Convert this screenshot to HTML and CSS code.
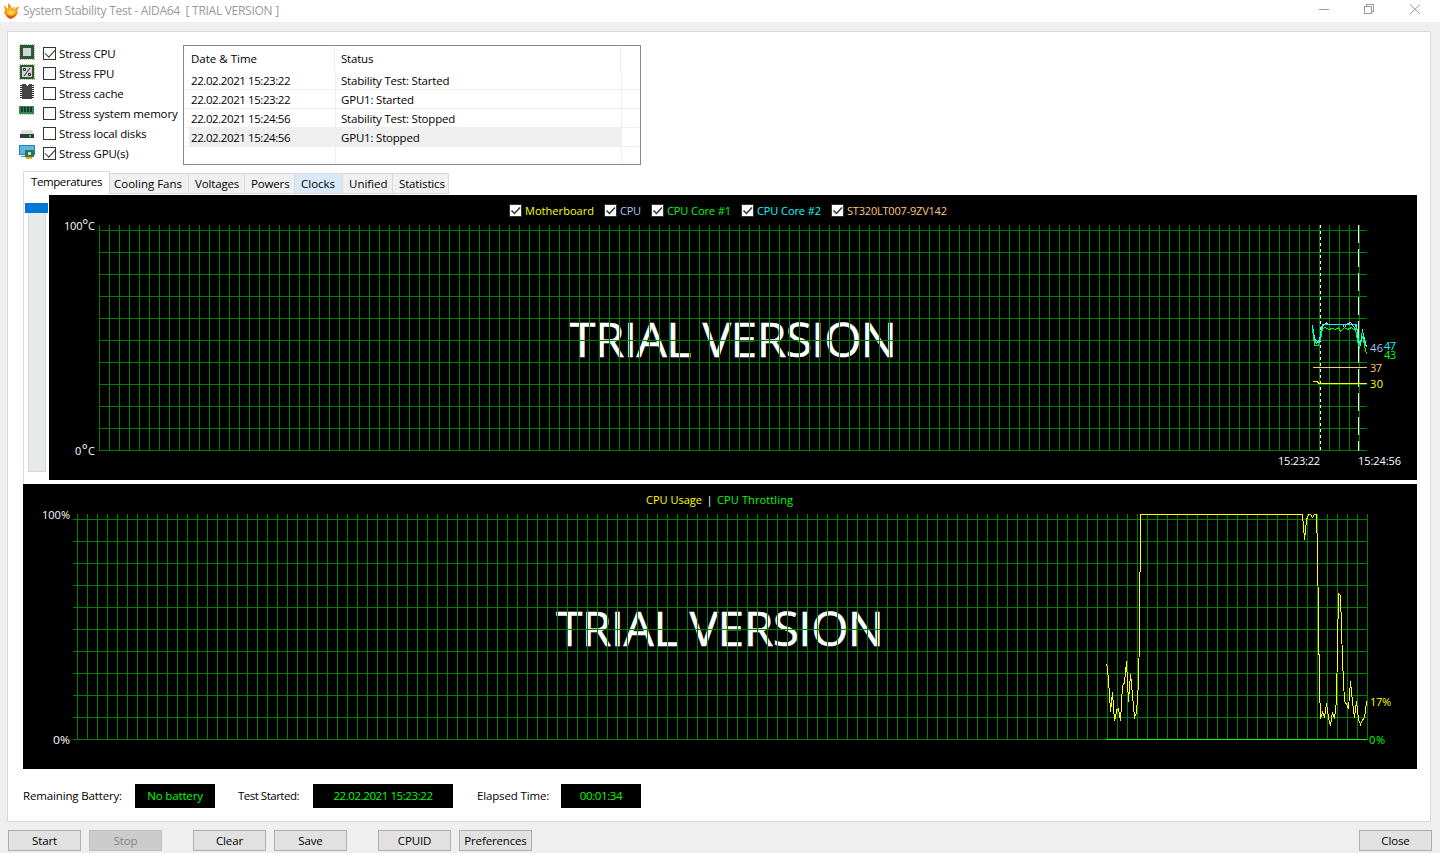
FILE: index.html
```html
<!DOCTYPE html>
<html lang="en">
<head>
    <meta charset="UTF-8">
    <meta name="viewport" content="width=device-width, initial-scale=1.0">
    <title>System Stability Test - AIDA64</title>
    <link rel="stylesheet" href="styles.css">
</head>
<body>
    <div class="titlebar">
        <svg class="logo" width="16" height="18" viewBox="0 0 16 18">
            <path fill="#f7931e" d="M1 4l4 4 0-6 3 3 1 3 3-3-1 4 3-3 2 0-2 4 1 2-3 4-4 2-4-2-3-4 1-3z"/>
            <path fill="#ffd83c" d="M3 8l3 3 0-6 2 5 3-2-1 3 3-2-2 4-3 1-3-1z"/>
            <path fill="#e5521a" d="M3 13l3 2 4 0 4-2-3 3-3 2-3-1z"/>
        </svg>
        <span class="caption">System Stability Test - AIDA64&nbsp; [ TRIAL VERSION ]</span>
        <svg class="winbtns" width="104" height="18" viewBox="1318 0 104 18">
            <path d="M1319 9.5h10M1364.500 6.500h7v7h-7zM1366.500 6v-2h7v7h-2"/>
            <path class="smooth" d="M1410 4.500l10 9.500M1420 4.500l-10 9.500"/>
        </svg>
    </div>

    <div class="panel">
        <div class="top">
            <ul class="stress">
                <li>
                    <svg width="16" height="16"><rect x=".5" y=".5" width="15" height="15" fill="none" stroke="#c9a94b" stroke-dasharray="1 1"/><rect x="1" y="1" width="14" height="14" fill="#27593f"/><rect x="4" y="4" width="8" height="8" fill="#d5d5d5"/></svg>
                    <i class="box on"></i><span>Stress CPU</span>
                </li>
                <li>
                    <svg width="16" height="16"><rect x=".5" y=".5" width="15" height="15" fill="none" stroke="#c9a94b" stroke-dasharray="1 1"/><rect x="1" y="1" width="14" height="14" fill="#27593f"/><rect x="3" y="3" width="10" height="10" fill="#d5d5d5"/><path d="M11 4l-6 8M4.500 4.500h2v2h-2zM9.500 9.500h2v2h-2z" fill="none" stroke="#222" shape-rendering="auto"/></svg>
                    <i class="box"></i><span>Stress FPU</span>
                </li>
                <li>
                    <svg width="16" height="16"><path d="M2.500 1v14M13.500 1v14" stroke="#222" stroke-width="3" stroke-dasharray="1 1"/><path d="M3 0h3l2 2 2-2h3v15H3z" fill="#444446"/></svg>
                    <i class="box"></i><span>Stress cache</span>
                </li>
                <li>
                    <svg width="16" height="16"><path d="M0 2h15v8H0z" fill="#2f8a5b"/><path d="M2 3h2v5H2zM5 3h2v5H5zM8 3h2v5H8zM11 3h2v5h-2z" fill="#24342c"/><path d="M1 10.500h13" stroke="#c9b458" stroke-dasharray="1 1"/></svg>
                    <i class="box"></i><span>Stress system memory</span>
                </li>
                <li>
                    <svg width="16" height="16"><path d="M3 6h10l2 4H1z" fill="#dcdcdc"/><path d="M1 10h14v4H1z" fill="#3a3a3a"/><path d="M10 11h2v2h-2z" fill="#2ce02c"/></svg>
                    <i class="box"></i><span>Stress local disks</span>
                </li>
                <li>
                    <svg width="16" height="16"><path d="M.5 1.500h15v9H.5z" fill="#5fb5ea" stroke="#2b7fb8"/><path d="M2 12h5v1H2z" fill="#4a94c4"/><path d="M6 6h9v7H6z" fill="#2a7a4e"/><path d="M9 8h3v3H9z" fill="#c8dccb"/><path d="M7 13h6v2H7z" fill="#f0a22b"/></svg>
                    <i class="box on"></i><span>Stress GPU(s)</span>
                </li>
            </ul>
            <div class="log">
                <div class="row head"><span>Date &amp; Time</span><span>Status</span></div>
                <div class="row"><span>22.02.2021 15:23:22</span><span>Stability Test: Started</span></div>
                <div class="row"><span>22.02.2021 15:23:22</span><span>GPU1: Started</span></div>
                <div class="row"><span>22.02.2021 15:24:56</span><span>Stability Test: Stopped</span></div>
                <div class="row selected"><span>22.02.2021 15:24:56</span><span>GPU1: Stopped</span></div>
                <div class="row last"><span></span><span></span></div>
            </div>
        </div>

        <div class="tabs">
            <div class="tab active">Temperatures</div>
            <div class="tab fans">Cooling Fans</div>
            <div class="tab volt">Voltages</div>
            <div class="tab pow">Powers</div>
            <div class="tab clk">Clocks</div>
            <div class="tab uni">Unified</div>
            <div class="tab stat">Statistics</div>
        </div>

        <div class="page">
            <div class="slider"><div class="thumb"></div></div>
            <svg class="chart" width="1368" height="285" viewBox="49 195 1368 285">
                <defs>
                    <pattern id="grid1" x="99" y="230" width="10" height="22" patternUnits="userSpaceOnUse">
                        <path d="M0 0h10v1H1v21H0z" fill="#008000"/>
                    </pattern>
                    <g id="check">
                        <path d="M.5.5h12v12H.5z" fill="#fff" stroke="#333"/>
                        <path d="M2.500 6.500l3 3 5.500-6" fill="none" stroke="#333" stroke-width="1.500" shape-rendering="auto"/>
                    </g>
                </defs>
                <use href="#check" x="509" y="204"/>
                <text x="525" y="215" textLength="69" fill="#ffff00">Motherboard</text>
                <use href="#check" x="604" y="204"/>
                <text x="620" y="215" textLength="21" fill="#a6caf0">CPU</text>
                <use href="#check" x="651" y="204"/>
                <text x="667" y="215" textLength="64" fill="#00ff00">CPU Core #1</text>
                <use href="#check" x="741" y="204"/>
                <text x="757" y="215" textLength="64" fill="#00ffff">CPU Core #2</text>
                <use href="#check" x="831" y="204"/>
                <text x="847" y="215" textLength="100" fill="#ffc878">ST320LT007-9ZV142</text>

                <text x="64" y="230" textLength="31" fill="#fff">100<tspan class="deg">°</tspan>C</text>
                <text x="75" y="455" textLength="20" fill="#fff">0<tspan class="deg">°</tspan>C</text>
                <text class="trial" x="569" y="357" textLength="328">TRIAL VERSION</text>
                <rect x="99" y="225" width="1268" height="226" fill="url(#grid1)"/>
                <path d="M1360 225h7v5h-7z"/>

                <path class="mark" d="M1320.500 225v226" stroke-dasharray="3 3"/>
                <path class="mark" d="M1358.500 225v226" stroke-dasharray="18 6"/>
                <polyline points="1312.500,325.500 1314.500,338.500 1317.500,341.500 1319.500,340.500 1321.500,328.500 1323.500,324.500 1325.500,324.500 1326.500,322.500 1328.500,324.500 1342.500,324.500 1344.500,327.500 1346.500,324.500 1350.500,322.500 1352.500,325.500 1354.500,327.500 1356.500,324.500 1358.500,342.500 1360.500,341.500 1363.500,334.500 1366.500,347.500" stroke="#a6caf0"/>
                <polyline points="1312.500,328.500 1314.500,345.500 1318.500,345.500 1320.500,339.500 1322.500,328.500 1325.500,327.500 1328.500,329.500 1332.500,328.500 1335.500,329.500 1338.500,327.500 1340.500,331.500 1344.500,327.500 1347.500,329.500 1351.500,327.500 1353.500,329.500 1355.500,328.500 1357.500,341.500 1359.500,347.500 1362.500,336.500 1366.500,354.500" stroke="#00ff00"/>
                <polyline points="1312.500,325.500 1314.500,339.500 1316.500,343.500 1319.500,341.500 1321.500,328.500 1322.500,324.500 1356.500,324.500 1357.500,335.500 1359.500,344.500 1360.500,345.500 1362.500,329.500 1364.500,341.500 1366.500,347.500" stroke="#00ffff"/>
                <path d="M1313 367.500h54" stroke="#ffc878"/>
                <path d="M1313 381.500h4l2 2h48" stroke="#ffff00" fill="none"/>
                <text x="1370" y="352" textLength="13" fill="#a6caf0">46</text>
                <text x="1384" y="350" textLength="12" fill="#00ffff">47</text>
                <text x="1384" y="359" textLength="12" fill="#00ff00">43</text>
                <text x="1370" y="372" textLength="12" fill="#ffc878">37</text>
                <text x="1370" y="388" textLength="13" fill="#ffff00">30</text>
                <text x="1278" y="465" textLength="42" fill="#fff">15:23:22</text>
                <text x="1358" y="465" textLength="43" fill="#fff">15:24:56</text>
            </svg>
        </div>

        <svg class="chart usage" width="1394" height="285" viewBox="23 484 1394 285">
            <defs>
                <pattern id="grid2" x="77" y="519" width="10" height="22" patternUnits="userSpaceOnUse">
                    <path d="M0 0h10v1H1v21H0z" fill="#008000"/>
                </pattern>
            </defs>
            <text x="646" y="504" textLength="56" fill="#ffff00">CPU Usage</text>
            <text x="706.500" y="504" fill="#fff">|</text>
            <text x="717" y="504" textLength="76" fill="#00ff00">CPU Throttling</text>
            <text x="42" y="519" textLength="28" fill="#fff">100%</text>
            <text x="53" y="744" textLength="17" lengthAdjust="spacingAndGlyphs" fill="#fff">0%</text>
            <text class="trial" x="556" y="646" textLength="328">TRIAL VERSION</text>
            <rect x="73" y="514" width="1295" height="226" fill="url(#grid2)"/>
            <path d="M1107 739.500h260" stroke="#00ff00"/>
            <polyline stroke="#ffff00" points="1106.500,664.500 1107.500,667 1108.500,683 1109.500,693 1110.500,712 1112.500,692.500 1114.500,721 1117,709.500 1118.500,708.500 1120.500,721 1122.500,685.500 1124.500,683 1126.500,661.500 1128.500,701.500 1130.500,674 1132.500,695 1134.500,717.500 1136.500,713 1138.500,683 1139.500,633 1140.500,514.500 1302.500,514.500 1304.500,539.500 1306.500,520 1308.500,514.500 1310.500,514.500 1312.500,517.500 1314.500,514.500 1316.500,514.500 1317.500,550 1318.500,621.500 1319.500,686.500 1320.500,719 1322.500,712 1324.500,717.500 1326.500,703.500 1328.500,718 1330.500,726 1332.500,712 1334.500,719 1336.500,700 1338.500,593.500 1340.500,595.500 1342.500,660 1344.500,701.500 1346.500,704 1348.500,708.500 1350.500,681.500 1352.500,702 1354.500,717.500 1356.500,701.500 1358.500,719.500 1360.500,724.500 1362.500,719.500 1364.500,718.500 1366.500,701.500"/>
            <text x="1370" y="706" textLength="21" fill="#ffff00">17%</text>
            <text x="1369" y="744" textLength="16" fill="#00ff00">0%</text>
        </svg>

        <div class="status">
            <span class="l1">Remaining Battery:</span><b class="v1">No battery</b>
            <span class="l2">Test Started:</span><b class="v2">22.02.2021 15:23:22</b>
            <span class="l3">Elapsed Time:</span><b class="v3">00:01:34</b>
        </div>
    </div>

    <div class="buttons">
        <button>Start</button>
        <button disabled>Stop</button>
        <button class="gap">Clear</button>
        <button>Save</button>
        <button class="gap">CPUID</button>
        <button>Preferences</button>
        <button class="close">Close</button>
    </div>
</body>
</html>
```

FILE: styles.css
```css
* {
    padding: 0;
    margin: 0;
    box-sizing: border-box;
}
body {
    width: 1440px;
    height: 853px;
    overflow: hidden;
    background-color: #efefef;
    font-family: "Open Sans", "Noto Sans", sans-serif;
    font-size: 11.5px;
    letter-spacing: -0.15px;
    color: #000;
}
li {
    list-style: none;
}
.titlebar {
    display: flex;
    align-items: center;
    height: 22px;
    padding: 0 18px 0 3px;
    background-color: #fff;
    color: #999;
}
.logo {
    margin-right: 4px;
    margin-bottom: 2px;
}
.caption {
    margin-bottom: 2px;
    font-size: 12px;
    letter-spacing: -0.28px;
}
.winbtns {
    margin-left: auto;
    margin-bottom: 4px;
    fill: none;
    stroke: #999;
    shape-rendering: crispEdges;
}
.smooth {
    shape-rendering: auto;
}
.panel {
    width: 1424px;
    height: 791px;
    margin: 9px 0 0 7px;
    padding: 0 0 0 15px;
    border: 1px solid #d9d9d9;
    background-color: #fff;
}
.top {
    display: flex;
    height: 139px;
}
.stress {
    width: 160px;
    padding-top: 11px;
    margin-left: -4px;
    margin-right: 4px;
}
.stress li {
    display: flex;
    align-items: center;
    height: 20px;
    white-space: nowrap;
}
.stress svg {
    flex: none;
    margin: -3px 8px 0 0;
    shape-rendering: crispEdges;
}
.box {
    flex: none;
    width: 13px;
    height: 13px;
    margin-right: 3px;
    border: 1px solid #333;
    background-color: #fff;
}
.on::after {
    content: "";
    display: block;
    width: 9px;
    height: 5px;
    margin: 1px 0 0 1px;
    border-left: 1.5px solid #333;
    border-bottom: 1.5px solid #333;
    transform: rotate(-47deg);
}
.log {
    width: 458px;
    height: 120px;
    margin-top: 13px;
    padding: 1px;
    border: 1px solid #828790;
}
.row {
    display: flex;
    height: 19px;
    line-height: 19.5px;
    border-bottom: 1px solid #efefef;
}
.row span {
    border-right: 1px solid #efefef;
}
.row span:first-child {
    width: 151px;
    padding-left: 6px;
    letter-spacing: -0.42px;
}
.row span:last-child {
    width: 286px;
    padding-left: 5px;
    letter-spacing: -0.2px;
}
.head {
    height: 24px;
    line-height: 23px;
    border-bottom: none;
}
.head span:first-child {
    width: 150px;
    letter-spacing: 0;
}
.head span:last-child {
    padding-left: 6px;
}
.selected {
    background: linear-gradient(#efefef, #efefef) 4px 0 / 433px 19px no-repeat;
}
.last {
    height: 16px;
    border-bottom: none;
}
.tabs {
    display: flex;
    align-items: flex-end;
    height: 23px;
}
.tab {
    height: 21px;
    line-height: 20px;
    padding-left: 6px;
    border: 1px solid #d9d9d9;
    border-left: none;
    background-color: #f0f0f0;
    white-space: nowrap;
}
.active {
    width: 87px;
    height: 23px;
    padding-left: 7px;
    border-left: 1px solid #d9d9d9;
    border-bottom: none;
    background-color: #fff;
    letter-spacing: -0.4px;
}
.fans {
    width: 79px;
    padding-left: 4px;
    letter-spacing: 0;
}
.volt {
    width: 56px;
}
.pow {
    width: 50px;
}
.clk {
    width: 48px;
    background-color: #d8eaf9;
    letter-spacing: 0;
}
.uni {
    width: 50px;
    letter-spacing: 0;
}
.stat {
    width: 56px;
}
.page {
    display: flex;
    width: 1394px;
    height: 290px;
    padding-top: 1px;
    border-left: 1px solid #d9d9d9;
}
.slider {
    width: 18px;
    height: 269px;
    margin: 8px 3px 0 4px;
    border: 1px solid #d6d6d6;
    background-color: #e7eaea;
}
.thumb {
    width: 23px;
    height: 10px;
    margin: -1px 0 0 -4px;
    background-color: #0078d7;
}
.chart {
    display: block;
    flex: none;
    background-color: #000;
    shape-rendering: crispEdges;
    font-size: 11px;
    letter-spacing: 0;
}
.chart polyline {
    fill: none;
}
.mark {
    stroke: #fff;
}
.deg {
    font-size: 14px;
}
.trial {
    font-size: 48px;
    fill: #fff;
    stroke: #fff;
    stroke-width: 0.5px;
}
.status {
    display: flex;
    margin-top: 15px;
    line-height: 24px;
}
.status b {
    height: 24px;
    line-height: 23px;
    background-color: #000;
    color: #00ff00;
    font-weight: normal;
    text-align: center;
}
.l1 {
    width: 112px;
}
.l2 {
    width: 75px;
    margin-left: 23px;
    letter-spacing: -0.5px;
}
.l3 {
    width: 84px;
    margin-left: 24px;
}
.v1, .v3 {
    width: 80px;
}
.status .v2 {
    width: 140px;
    letter-spacing: -0.42px;
}
.status .v3 {
    letter-spacing: -0.4px;
}
.buttons {
    display: flex;
    gap: 8px;
    padding: 8px 8px 0;
}
button {
    width: 73px;
    height: 21px;
    border: 1px solid #adadad;
    background-color: #e1e1e1;
    font: inherit;
    letter-spacing: -0.15px;
    color: #000;
}
button:disabled {
    border-color: #bfbfbf;
    background-color: #ccc;
    color: #838383;
}
.gap {
    margin-left: 23px;
}
.close {
    margin-left: auto;
}
```
